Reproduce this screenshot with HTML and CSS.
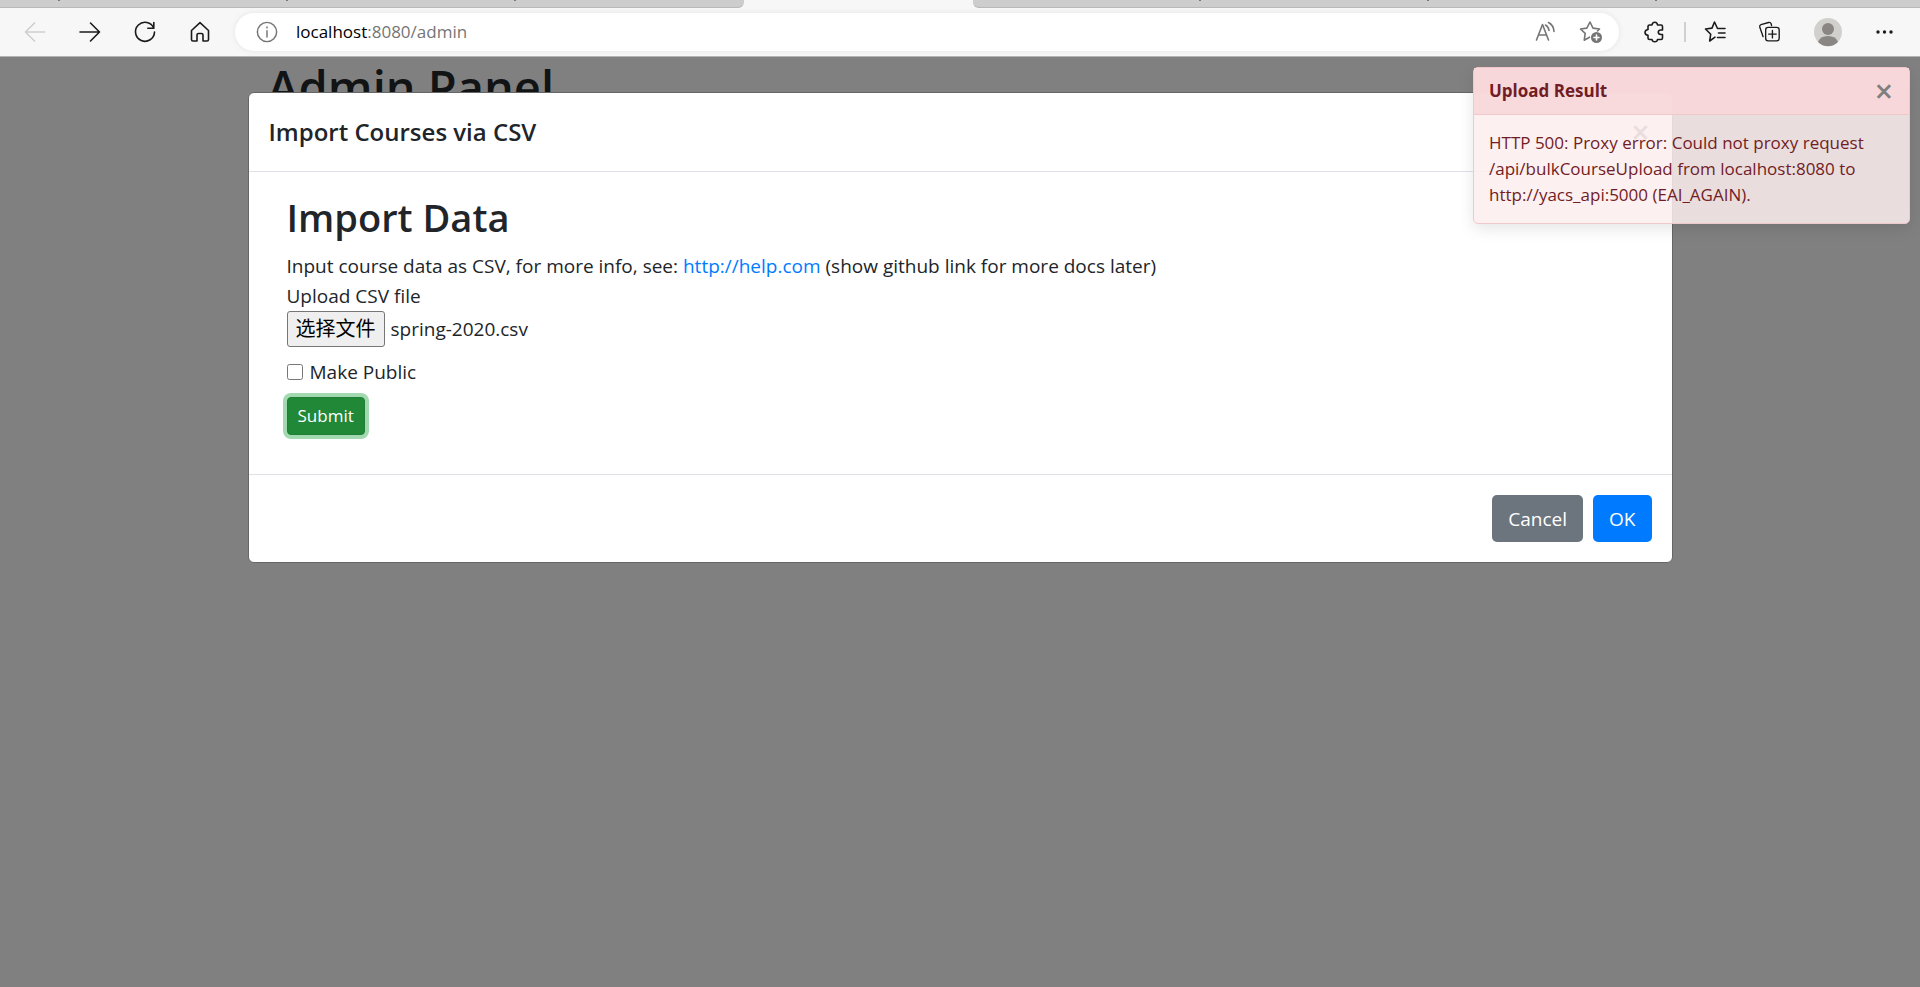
FILE: index.html
```html
<!DOCTYPE html>
<html lang="en">
<head>
<meta charset="utf-8">
<title>Admin Panel</title>
<link rel="stylesheet" href="styles.css">
</head>
<body>
<header class="browser">
  <div class="tabs">
    <div class="tab-group tab-group-left"><i></i><i></i><i></i></div>
    <div class="tab-group tab-group-right"><i></i><i></i><i></i></div>
  </div>
  <div class="toolbar">
    <nav class="nav">
      <button class="tool disabled" type="button" aria-label="Back"><svg width="24" height="24" viewBox="0 0 24 24"><path d="M21.500 12H2.500M11.500 3L2.500 12l9 9"/></svg></button>
      <button class="tool" type="button" aria-label="Forward"><svg width="24" height="24" viewBox="0 0 24 24"><path d="M2 12h19.500M12.500 3l9 9-9 9"/></svg></button>
      <button class="tool" type="button" aria-label="Refresh"><svg width="24" height="24" viewBox="0 0 24 24"><path d="M20.800 8.200A9.500 9.500 0 1 0 21.500 12M20.800 2.500v5.700h-6"/></svg></button>
      <button class="tool" type="button" aria-label="Home"><svg width="24" height="24" viewBox="0 0 24 24"><path d="M3.500 10.500L12 2.700l8.500 7.800v9q0 1.500-1.500 1.500h-4v-6q0-1.500-1.500-1.500h-3q-1.500 0-1.500 1.500v6H5q-1.500 0-1.500-1.500z"/></svg></button>
    </nav>
    <div class="address">
      <svg class="muted" width="22" height="22" viewBox="0 0 24 24"><circle cx="12" cy="12" r="10.500"/><path d="M12 10.500v7M12 6.500v1"/></svg>
      <span class="url">localhost<span>:8080/admin</span></span>
      <button class="tool muted" type="button" aria-label="Read aloud"><svg width="24" height="24" viewBox="0 0 24 24"><path d="M3.500 20L9.500 4.500l6 15.500M5.500 15h8M12.500 5q3 1.500 3.500 5.500M15.500 2.500q5 2.500 5.500 9"/></svg></button>
      <button class="tool muted" type="button" aria-label="Add to favorites"><svg width="24" height="24" viewBox="0 0 24 24"><path d="M10.500 17.200l-5.300 3 1-6.800L1.500 9l6.300-.900L11 2l3 6.100L20.500 9l-2 2"/><circle class="solid" cx="17.500" cy="17.500" r="5.500"/><path class="light" d="M17.500 15v5M15 17.500h5"/></svg></button>
    </div>
    <div class="actions">
      <button class="tool" type="button" aria-label="Extensions"><svg width="24" height="24" viewBox="0 0 24 24"><path d="M7.500 5H10q.3-2.800 2.800-2.800T15.500 5H19q1.500 0 1.500 1.500V10H19q-2.700 0-2.700 2.200t2.700 2.300h1.500V18q0 1.500-1.500 1.500h-3.500q-.200 2.300-2.700 2.300T10 19.500H7.500Q6 19.500 6 18v-2.700Q3 14.800 3 12.500T6 9.500v-3Q6 5 7.500 5z"/></svg></button>
      <span class="separator"></span>
      <button class="tool" type="button" aria-label="Favorites"><svg width="24" height="24" viewBox="0 0 24 24"><path d="M11 17.200l-5.300 3.800 1-6.800L1.500 9l6.500-.900L10.500 2l3 6.500H21M14.500 13H21M13.500 17.500H21"/></svg></button>
      <button class="tool" type="button" aria-label="Collections"><svg width="22" height="22" viewBox="2 0 26 26"><path d="M4.500 18.500L.500 7.200Q0 5 2 4.300L11 1.800q2.200-.500 3 1.500l.5 2.200"/><rect x="7.500" y="7.500" width="16" height="16" rx="3"/><path d="M15.500 11v9M11 15.500h9"/></svg></button>
      <button class="tool" type="button" aria-label="Profile"><svg width="28" height="28" viewBox="0 0 28 28"><circle cx="14" cy="14" r="14" fill="#d2d0cd" stroke="none"/><circle cx="14" cy="11" r="6" fill="#8a8683" stroke="none"/><path d="M4 24q2-6 10-6t10 6a14 14 0 0 1-20 0z" fill="#8a8683" stroke="none"/></svg></button>
      <button class="tool" type="button" aria-label="Settings and more"><svg width="24" height="24" viewBox="0 0 24 24"><g fill="currentColor" stroke="none"><circle cx="6" cy="12" r="1.700"/><circle cx="12.500" cy="12" r="1.700"/><circle cx="19" cy="12" r="1.700"/></g></svg></button>
    </div>
  </div>
</header>
<main class="page">
  <h1 class="page-title">Admin Panel</h1>
  <div class="backdrop">
    <section class="modal" role="dialog" aria-labelledby="modal-title">
      <div class="modal-header">
        <h5 class="modal-title" id="modal-title">Import Courses via CSV</h5>
        <button class="close" type="button" aria-label="Close">×</button>
      </div>
      <form class="modal-body">
        <h2 class="heading">Import Data</h2>
        <div>Input course data as CSV, for more info, see: <a href="http://help.com">http://help.com</a> (show github link for more docs later)</div>
        <label class="field-label" for="csv-file">Upload CSV file</label>
        <div class="file-row">
          <input class="file-input" id="csv-file" type="file" accept=".csv">
          <label class="file-button" for="csv-file" lang="zh">选择文件</label>
          <span>spring-2020.csv</span>
        </div>
        <div class="check-row">
          <input class="check" id="public" type="checkbox">
          <label for="public">Make Public</label>
        </div>
        <button class="submit" type="button">Submit</button>
      </form>
      <div class="modal-footer">
        <button class="btn btn-secondary" type="button">Cancel</button>
        <button class="btn btn-primary" type="button">OK</button>
      </div>
    </section>
  </div>
  <aside class="toast" role="alert">
    <div class="toast-header">
      <strong>Upload Result</strong>
      <button class="close" type="button" aria-label="Close">×</button>
    </div>
    <div class="toast-body">HTTP 500: Proxy error: Could not proxy request /api/bulkCourseUpload from localhost:8080 to http://yacs_api:5000 (EAI_AGAIN).</div>
  </aside>
</main>
</body>
</html>
```
FILE: styles.css
```css
* { box-sizing: border-box; }
body {
  margin: 0;
  min-height: 100vh;
  display: flex;
  flex-direction: column;
  font-family: "Open Sans", "Noto Sans CJK SC", sans-serif;
  font-size: 19px;
  line-height: 30px;
  color: #212529;
  background: #808080;
}
button { font-family: inherit; }
h1, h2, h5 { margin: 0; }

/* Browser chrome */
.browser { background: #f7f7f7; border-bottom: 1px solid #b4b4b4; }
.tabs { display: flex; justify-content: space-between; height: 8px; }
.tab-group {
  display: flex;
  gap: 226px;
  background: #cdcdcd;
  border-bottom: 1px solid #b8b8b8;
}
.tab-group i { width: 2px; height: 1px; background: #777; }
.tab-group-left { flex: 0 1 744px; padding-left: 58px; border-bottom-right-radius: 6px; }
.tab-group-right { flex: 0 1 947px; padding-left: 226px; border-bottom-left-radius: 6px; }
.toolbar { display: flex; align-items: center; height: 48px; padding: 0 20px 0 19px; }
.nav { display: flex; gap: 23px; margin-right: 19px; }
.tool {
  display: flex;
  align-items: center;
  justify-content: center;
  width: 32px;
  height: 32px;
  padding: 0;
  border: 0;
  background: none;
  color: #1b1b1b;
}
.toolbar svg { fill: none; stroke: currentColor; stroke-width: 1.6; stroke-linejoin: round; stroke-linecap: round; flex: none; overflow: visible; }
.toolbar .disabled { color: #cfcfcf; }
.toolbar .muted { color: #757575; }
.toolbar .solid { fill: #757575; stroke: none; }
.toolbar .light { stroke: #fff; }
.address {
  flex: 1;
  display: flex;
  align-items: center;
  gap: 14px;
  height: 38px;
  padding: 0 12px 0 21px;
  border-radius: 19px;
  background: #fff;
  box-shadow: 0 0 6px rgba(0, 0, 0, .08);
}
.url { flex: 1; padding-left: 4px; font-size: 17px; color: #000; }
.url span { color: #757575; }
.actions { display: flex; align-items: center; gap: 24px; margin-left: 19px; }
.separator { width: 2px; height: 20px; margin: 0 -10px; background: #d0d0d0; }

/* Page under the overlay */
.page { flex: 1; position: relative; }
.page-title {
  width: 1425px;
  max-width: 100%;
  margin: 0 auto;
  padding: 0 20px;
  font-size: 47px;
  font-weight: 600;
  line-height: 60px;
  color: #111315;
}
.backdrop { position: absolute; inset: 0; padding: 35px 20px; }

/* Modal */
.modal {
  max-width: 1425px;
  margin: 0 auto;
  border: 1px solid #666;
  border-radius: 6px;
  background: #fff;
}
.modal-header {
  display: flex;
  align-items: center;
  justify-content: space-between;
  padding: 20px 22px 20px 20px;
  border-bottom: 1px solid #dee2e6;
}
.modal-title { font-size: 24px; font-weight: 600; line-height: 38px; }
.close {
  padding: 0;
  border: 0;
  background: none;
  font-size: 32px;
  font-weight: 600;
  line-height: 26px;
  color: #7f7f7f;
}
.modal-body { display: flex; flex-direction: column; align-items: flex-start; padding: 21px 38px 39px; }
.heading { margin-bottom: 10px; font-size: 38px; font-weight: 600; line-height: 48px; }
a { color: #007bff; text-decoration: none; }
.file-row { position: relative; display: flex; align-items: center; gap: 6px; margin-bottom: 10px; }
.file-input { position: absolute; width: 1px; height: 1px; opacity: 0; }
.file-button {
  padding: 2px 8px;
  border: 1px solid #767676;
  border-radius: 3px;
  background: #efefef;
  font-size: 20px;
  color: #000;
}
.check-row { display: flex; align-items: center; gap: 7px; margin-bottom: 10px; }
.check { width: 16px; height: 16px; margin: 0; }
.submit {
  padding: 4px 10px;
  border: 1px solid #1e7e34;
  border-radius: 4px;
  background: #218838;
  box-shadow: 0 0 0 4px #a3d9b0;
  font-size: 17px;
  line-height: 28px;
  color: #fff;
}
.modal-footer {
  display: flex;
  justify-content: flex-end;
  gap: 10px;
  padding: 20px;
  border-top: 1px solid #dee2e6;
}
.btn { padding: 9px 16px 8px; border: 0; border-radius: 5px; font-size: 19px; line-height: 30px; color: #fff; }
.btn-secondary { background: #6c757d; }
.btn-primary { background: #007bff; }

/* Toast */
.toast {
  position: absolute;
  top: 10px;
  right: 10px;
  width: 437px;
  border: 1px solid #f0c8cc;
  border-radius: 5px;
  background: rgba(252, 237, 238, .85);
  box-shadow: 0 5px 15px rgba(0, 0, 0, .1);
  font-size: 17px;
  line-height: 26px;
  color: #721c24;
}
.toast-header {
  display: flex;
  align-items: center;
  justify-content: space-between;
  padding: 10px 16px 10px 15px;
  border-bottom: 1px solid #f0c8cc;
  background: rgba(248, 215, 218, .94);
}
.toast-body { padding: 15px; }
```
